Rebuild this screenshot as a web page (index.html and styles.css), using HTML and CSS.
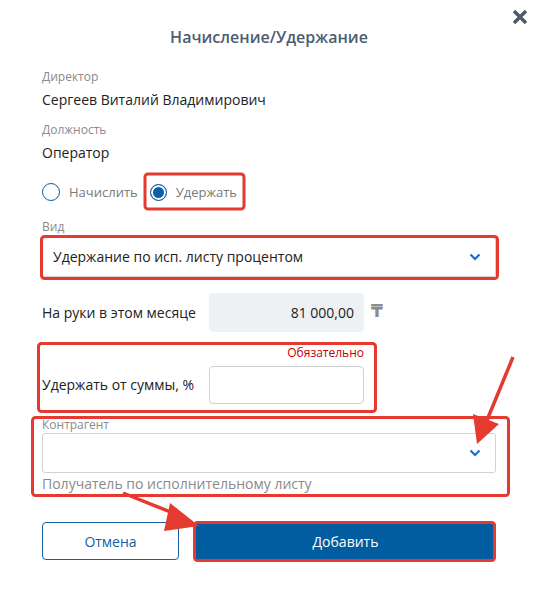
FILE: index.html
```html
<!DOCTYPE html>
<html lang="ru">
<head>
<meta charset="utf-8">
<title>Начисление/Удержание</title>
<link rel="stylesheet" href="styles.css">
</head>
<body>
<div class="dialog">
  <button class="close" aria-label="Закрыть">
    <svg width="16" height="16" viewBox="0 0 16 16"><path d="M2 2 L14 14 M14 2 L2 14" stroke="#4a5a6b" stroke-width="3.4" stroke-linecap="butt"/></svg>
  </button>
  <h1 class="title">Начисление/Удержание</h1>

  <div class="info first">
    <div class="label">Директор</div>
    <div class="value">Сергеев Виталий Владимирович</div>
  </div>
  <div class="info second">
    <div class="label">Должность</div>
    <div class="value">Оператор</div>
  </div>

  <div class="radios">
    <label class="radio"><span class="dot"></span><span class="rtext">Начислить</span></label>
    <label class="radio checked"><span class="dot"></span><span class="rtext">Удержать</span></label>
  </div>

  <div class="label vid">Вид</div>
  <div class="select">
    <span class="seltext">Удержание по исп. листу процентом</span>
    <svg class="chev" width="12" height="8" viewBox="0 0 12 8"><path d="M1.5 1.5 L6 6 L10.5 1.5" fill="none" stroke="#1a6fd0" stroke-width="2.2"/></svg>
  </div>

  <div class="row amount">
    <div class="rlabel">На руки в этом месяце</div>
    <div class="readonly">81 000,00</div>
    <div class="cur">₸</div>
  </div>

  <div class="required-wrap">
    <div class="req">Обязательно</div>
  </div>
  <div class="row percent">
    <div class="rlabel">Удержать от суммы, %</div>
    <div class="input"></div>
  </div>

  <div class="label kontr">Контрагент</div>
  <div class="select empty">
    <span class="seltext"></span>
    <svg class="chev" width="12" height="8" viewBox="0 0 12 8"><path d="M1.5 1.5 L6 6 L10.5 1.5" fill="none" stroke="#1a6fd0" stroke-width="2.2"/></svg>
  </div>
  <div class="hint">Получатель по исполнительному листу</div>

  <div class="buttons">
    <button class="btn cancel">Отмена</button>
    <button class="btn add">Добавить</button>
  </div>

  <svg class="annot" width="538" height="597" viewBox="0 0 538 597">
    <g fill="none" stroke="#e53a30" stroke-width="3">
      <rect x="145" y="174" width="99" height="35" rx="3"/>
      <rect x="41.5" y="236.5" width="456" height="42" rx="3"/>
      <rect x="38.5" y="343.5" width="337" height="68" rx="3"/>
      <rect x="32.5" y="417.5" width="476" height="78" rx="3"/>
      <rect x="194.5" y="522.5" width="300" height="38" rx="3"/>
      <line x1="513" y1="357" x2="485" y2="425" stroke-width="3.5"/>
      <line x1="123" y1="493" x2="178" y2="515" stroke-width="3.5"/>
    </g>
    <g fill="#e53a30">
      <polygon points="477,444 473,414 499,424"/>
      <polygon points="199,526 170,503 164,531"/>
    </g>
  </svg>
</div>
</body>
</html>
```

FILE: styles.css
```css
* { box-sizing: border-box; }

html, body {
  margin: 0;
  padding: 0;
  background: #ffffff;
}

body {
  font-family: "Open Sans", "Noto Sans", "DejaVu Sans", sans-serif;
  color: #222;
}

.dialog {
  position: relative;
  width: 538px;
  height: 597px;
  padding: 0 42px;
  overflow: hidden;
}

.close {
  position: absolute;
  top: 9px;
  right: 10px;
  width: 16px;
  height: 16px;
  padding: 0;
  border: 0;
  background: none;
  line-height: 0;
}

.title {
  margin: 26px 0 0;
  font-size: 16px;
  line-height: 22px;
  font-weight: 600;
  text-align: center;
  color: #4d5d70;
}

.label {
  font-size: 12px;
  line-height: 16px;
  color: #8a8a8a;
}

.value {
  margin-top: 5px;
  font-size: 14px;
  line-height: 20px;
  color: #222;
}

.info.first { margin-top: 21px; }
.info.second { margin-top: 12px; }

.radios {
  display: flex;
  align-items: center;
  height: 20px;
  margin-top: 19px;
}

.radio {
  display: flex;
  align-items: center;
  gap: 9px;
}

.radio + .radio { margin-left: 12px; }

.dot {
  width: 18px;
  height: 18px;
  border: 1.5px solid #0b5ea8;
  border-radius: 50%;
  background: #fff;
}

.radio.checked .dot {
  width: 17px;
  height: 17px;
  background: #0b5ea8;
  box-shadow: inset 0 0 0 2px #fff;
}

.rtext {
  font-size: 13px;
  line-height: 18px;
  color: #7a7a7a;
}

.label.vid { margin-top: 17px; }

.select {
  display: flex;
  align-items: center;
  justify-content: space-between;
  height: 40px;
  margin-top: 2px;
  padding: 0 14px 0 10px;
  border: 1px solid #d2d2d2;
  border-radius: 3px;
  background: #fff;
}

.seltext {
  font-size: 14px;
  line-height: 20px;
  color: #222;
}

.chev { display: block; }

.row {
  display: flex;
  align-items: center;
}

.rlabel {
  width: 167px;
  font-size: 14px;
  line-height: 20px;
  color: #222;
}

.amount {
  margin-top: 16px;
  height: 39px;
}

.readonly {
  width: 155px;
  height: 39px;
  padding-right: 10px;
  border-radius: 4px;
  background: #eef1f4;
  font-size: 14px;
  line-height: 39px;
  text-align: right;
  color: #222;
}

.cur {
  margin-left: 7px;
  margin-top: -4px;
  font-family: "DejaVu Sans", sans-serif;
  font-size: 17px;
  font-weight: bold;
  color: #8c8c8c;
}

.required-wrap {
  margin-top: 13px;
  padding-left: 167px;
  width: 322px;
}

.req {
  font-size: 12px;
  line-height: 16px;
  text-align: right;
  color: #c00000;
}

.percent {
  margin-top: 5px;
  height: 38px;
}

.input {
  width: 155px;
  height: 38px;
  border: 1px solid #d0d0d0;
  border-radius: 4px;
  background: #fff;
}

.label.kontr { margin-top: 13px; }

.select.empty { margin-top: 0; }

.hint {
  margin-top: 1px;
  font-size: 14px;
  line-height: 20px;
  color: #8a8a8a;
}

.buttons {
  display: flex;
  gap: 16px;
  margin-top: 28px;
}

.btn {
  height: 38px;
  border-radius: 4px;
  font-family: "Open Sans", "Noto Sans", sans-serif;
  font-size: 14px;
}

.cancel {
  width: 137px;
  border: 1px solid #1560a4;
  background: #fff;
  color: #1560a4;
}

.add {
  flex: 1;
  border: 0;
  background: #015ca0;
  color: #fff;
}

.annot {
  position: absolute;
  top: 0;
  left: 0;
  pointer-events: none;
}
```
